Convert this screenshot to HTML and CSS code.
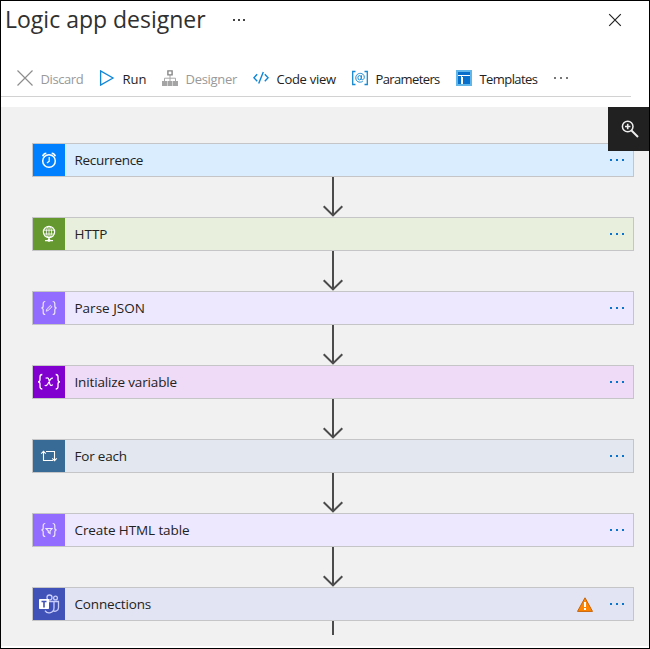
FILE: index.html
```html
<!DOCTYPE html>
<html lang="en">
<head>
<meta charset="utf-8">
<title>Logic app designer</title>
<link rel="stylesheet" href="styles.css">
</head>
<body>
<div class="window">
  <header class="header">
    <h1 class="title">Logic app designer</h1>
    <svg class="title-more" width="12" height="2" viewBox="0 0 12 2" fill="#444"><path d="M0 0h2v2H0zM5 0h2v2H5zM10 0h2v2h-2z"/></svg>
    <svg class="close" width="14" height="14" viewBox="0 0 14 14" fill="none" stroke="#222" stroke-width="1.2"><path d="M1.2 1.2 12.8 12.8M12.8 1.2 1.2 12.8"/></svg>
  </header>

  <nav class="toolbar">
    <div class="tool disabled">
      <svg width="16" height="16" viewBox="0 0 16 16" fill="none" stroke="#8d8d8d" stroke-width="1.2"><path d="M.5.5 15.5 15.5M15.5.5.5 15.5"/></svg>
      <span class="t-discard">Discard</span>
    </div>
    <div class="tool">
      <svg width="16" height="16" viewBox="0 0 16 16" fill="none" stroke="#0f86d8" stroke-width="1.3"><path d="M1.6.9V15.100L14 8Z"/></svg>
      <span class="t-run">Run</span>
    </div>
    <div class="tool disabled">
      <svg width="16" height="16" viewBox="0 0 16 16"><path d="M8 5v3M2.500 11V8.200H13.500V11M8 8v3" fill="none" stroke="#a8a8a8"/><path d="M5.900.9h4.200v4H5.900z" fill="#fff" stroke="#858585" stroke-width="1.400"/><path d="M0 11h5v5H0zM5.500 11h5v5h-5zM11 11h5v5h-5z" fill="#a5a5a5"/></svg>
      <span class="t-designer">Designer</span>
    </div>
    <div class="tool">
      <svg width="16" height="16" viewBox="0 0 16 16" fill="none" stroke="#0f86d8" stroke-width="1.400"><path d="M4.200 4.200.9 7.700 4.200 11.200M11.800 4.200 15.100 7.700 11.800 11.200M10.300 1.900 5.700 13.500"/></svg>
      <span class="t-code">Code view</span>
    </div>
    <div class="tool">
      <svg width="16" height="16" viewBox="0 0 16 16" fill="none" stroke="#1489d2"><path d="M3.500 1.500H.7V14.500H3.500M12.500 1.500H15.300V14.500H12.500" stroke-width="1.300"/><ellipse cx="7.600" cy="7.700" rx="1.700" ry="2.200"/><path d="M9.600 5.300 9.200 8.600C9.200 10.600 12.300 10 12.300 7.200 12.300 1.900 3.800 2.100 3.800 7.800 3.800 11.900 7.500 13 10.700 11.500"/></svg>
      <span class="t-param">Parameters</span>
    </div>
    <div class="tool">
      <svg class="template-icon" width="16" height="16" viewBox="0 0 16 16"><path d="M0 0h16v16H0z" fill="#60b5e9"/><path d="M2 2h12v12H2z" fill="#fff"/><path d="M2 2h12v3H2zM2 6h3v8H2zM6 6h8v1H6zM7 7h7v7H7z" fill="#0870cb"/></svg>
      <span class="t-templates">Templates</span>
    </div>
    <svg class="toolbar-more" width="16" height="2" viewBox="0 0 16 2" fill="#777"><path d="M0 0h2v2H0zM6 0h2v2H6zM12 0h2v2h-2z"/></svg>
  </nav>

  <main class="canvas">
    <div class="zoom-button"><svg width="18" height="18" viewBox="0 0 18 18" fill="none" stroke="#eee"><circle cx="6.700" cy="6.500" r="5.300" stroke-width="1.500"/><path d="M6.700 3.800v5.400M4 6.500h5.400" stroke-width="1.600"/><path d="M10.500 10.500 17 17" stroke-width="1.900"/></svg></div>

    <section class="card recurrence">
      <div class="card-icon"><svg width="32" height="32" viewBox="0 0 32 32" fill="none" stroke="#fff"><circle cx="16" cy="17" r="6.300" stroke-width="1.500"/><path d="M16.200 13v4.200L14 19" stroke-width="1.200"/><path d="M9.700 12.200Q10.500 9.400 13.300 9.200M18.700 9.200Q21.500 9.400 22.300 12.200" stroke-width="1.500"/></svg></div>
      <span class="card-name n-recurrence">Recurrence</span>
      <svg class="card-more" width="14" height="2" viewBox="0 0 14 2"><path d="M0 0h2v2H0zM6 0h2v2H6zM12 0h2v2h-2z"/></svg>
    </section>
    <svg class="arrow" width="22" height="40" viewBox="0 0 22 40"><path d="M11 0v38M1.700 29.200 11 38.400 20.300 29.200"/></svg>

    <section class="card http">
      <div class="card-icon"><svg width="32" height="32" viewBox="0 0 32 32" fill="none" stroke="#fff"><circle cx="16" cy="14" r="5.600" stroke-width="1.200"/><ellipse cx="16" cy="14" rx="2.600" ry="5.600" stroke-width=".8"/><path d="M10.600 12.200h10.800M10.600 16h10.800M16 8.500v11" stroke-width=".8"/><path d="M16 19.500v3M12 22.600h8" stroke-width="1.400"/><circle cx="16" cy="22.300" r="1.500" fill="#fff" stroke="none"/></svg></div>
      <span class="card-name n-http">HTTP</span>
      <svg class="card-more" width="14" height="2" viewBox="0 0 14 2"><path d="M0 0h2v2H0zM6 0h2v2H6zM12 0h2v2h-2z"/></svg>
    </section>
    <svg class="arrow" width="22" height="40" viewBox="0 0 22 40"><path d="M11 0v38M1.700 29.200 11 38.400 20.300 29.200"/></svg>

    <section class="card data">
      <div class="card-icon"><svg width="32" height="32" viewBox="0 0 32 32" fill="none" stroke="#eee7ff" stroke-width="1.200"><path d="M12.300 9.500C10.400 9.500 10.200 10.300 10.200 11.500V14Q10.200 16 8.300 16 10.200 16 10.200 18V20.500C10.200 21.700 10.400 22.500 12.300 22.500M19.700 9.500C21.600 9.500 21.800 10.300 21.800 11.500V14Q21.800 16 23.700 16 21.800 16 21.800 18V20.500C21.800 21.700 21.600 22.500 19.700 22.500"/><path d="M13.200 19.200 13.900 16.900 17.500 13.300 19 14.800 15.400 18.400Z" stroke-width=".9"/><path d="M14.500 18 18.200 14.300" stroke-width=".5"/></svg></div>
      <span class="card-name n-parse">Parse JSON</span>
      <svg class="card-more" width="14" height="2" viewBox="0 0 14 2"><path d="M0 0h2v2H0zM6 0h2v2H6zM12 0h2v2h-2z"/></svg>
    </section>
    <svg class="arrow" width="22" height="40" viewBox="0 0 22 40"><path d="M11 0v38M1.700 29.200 11 38.400 20.300 29.200"/></svg>

    <section class="card variable">
      <div class="card-icon"><svg width="32" height="32" viewBox="0 0 32 32" fill="none" stroke="#fff" stroke-width="1.300"><path d="M9.300 8.500C7.300 8.500 7 9.500 7 11V13.500Q7 15.800 5 15.800 7 15.800 7 18V20.500C7 22.300 7.300 23 9.300 23M22.700 8.500C24.700 8.500 25 9.500 25 11V13.500Q25 15.800 27 15.800 25 15.800 25 18V20.500C25 22.300 24.700 23 22.700 23"/><path d="M12.600 12.300C15.300 10.800 16 13 16.400 16 16.700 18.800 17.500 20.600 20 18.600M20 12.300C17.700 11.200 16.200 15.600 15 17.700 14 19.600 12.900 19.900 11.700 19.200" stroke-width="1.200"/></svg></div>
      <span class="card-name n-variable">Initialize variable</span>
      <svg class="card-more" width="14" height="2" viewBox="0 0 14 2"><path d="M0 0h2v2H0zM6 0h2v2H6zM12 0h2v2h-2z"/></svg>
    </section>
    <svg class="arrow" width="22" height="40" viewBox="0 0 22 40"><path d="M11 0v38M1.700 29.200 11 38.400 20.300 29.200"/></svg>

    <section class="card loop">
      <div class="card-icon"><svg width="32" height="32" viewBox="0 0 32 32" fill="none" stroke="#fff" stroke-width="1.100"><path d="M10.500 11.500v9h9.500M8.200 13.600 10.500 11.300 12.800 13.600M13 11.500h8.500v9M19.200 18.400 21.500 20.700 23.800 18.400"/></svg></div>
      <span class="card-name n-foreach">For each</span>
      <svg class="card-more" width="14" height="2" viewBox="0 0 14 2"><path d="M0 0h2v2H0zM6 0h2v2H6zM12 0h2v2h-2z"/></svg>
    </section>
    <svg class="arrow" width="22" height="40" viewBox="0 0 22 40"><path d="M11 0v38M1.700 29.200 11 38.400 20.300 29.200"/></svg>

    <section class="card data">
      <div class="card-icon"><svg width="32" height="32" viewBox="0 0 32 32" fill="none" stroke="#eee7ff" stroke-width="1.200"><path d="M12.300 9.500C10.400 9.500 10.200 10.300 10.200 11.500V14Q10.200 16 8.300 16 10.200 16 10.200 18V20.500C10.200 21.700 10.400 22.500 12.300 22.500M19.700 9.500C21.600 9.500 21.800 10.300 21.800 11.500V14Q21.800 16 23.700 16 21.800 16 21.800 18V20.500C21.800 21.700 21.600 22.500 19.700 22.500"/><path d="M13 14.500h6L17 17v2.400l-1.700-1V17Z"/></svg></div>
      <span class="card-name n-table">Create HTML table</span>
      <svg class="card-more" width="14" height="2" viewBox="0 0 14 2"><path d="M0 0h2v2H0zM6 0h2v2H6zM12 0h2v2h-2z"/></svg>
    </section>
    <svg class="arrow" width="22" height="40" viewBox="0 0 22 40"><path d="M11 0v38M1.700 29.200 11 38.400 20.300 29.200"/></svg>

    <section class="card teams">
      <div class="card-icon"><svg width="32" height="32" viewBox="0 0 32 32"><g fill="none" stroke="#c9cdfb" stroke-width="1.300"><circle cx="16.500" cy="9.500" r="2.500"/><circle cx="22.500" cy="10" r="1.900"/><path d="M14.500 13.500h6.500V20a4.900 4.900 0 0 1-9 2.600M21 13.500h4.500v6.200a3.600 3.600 0 0 1-5.500 3"/></g><rect x="6" y="11" width="10" height="10" rx=".7" fill="#fff"/><path d="M8.500 13.500h5M11 13.500v6" stroke="#4052b5" stroke-width="1.600"/></svg></div>
      <span class="card-name n-teams">Connections</span>
      <svg class="warning" width="16" height="15" viewBox="0 0 16 15"><path d="M8 .8 15.500 14.400H.5Z" fill="#ff8500" stroke="#c5640b"/><path d="M7 5h2v5H7zM7 11h2v2H7z" fill="#fff"/></svg>
      <svg class="card-more" width="14" height="2" viewBox="0 0 14 2"><path d="M0 0h2v2H0zM6 0h2v2H6zM12 0h2v2h-2z"/></svg>
    </section>
    <div class="tail"></div>
  </main>
</div>
</body>
</html>
```

FILE: styles.css
```css
* { box-sizing: border-box; }
body {
  margin: 0;
  background: #fff;
  font-family: "Open Sans", "Noto Sans", sans-serif;
  color: #222;
}
.window {
  width: 650px;
  height: 649px;
  border: 1px solid #000;
  overflow: hidden;
}
.header {
  display: flex;
  align-items: center;
  height: 38px;
  padding: 0 27px 0 4px;
}
.title {
  width: 228px;
  margin: 0;
  padding-bottom: 2px;
  font-size: 23px;
  font-weight: 400;
  line-height: 36px;
  white-space: nowrap;
  color: #303030;
}
.close { margin-left: auto; }
.toolbar {
  display: grid;
  grid-template-columns: 82px 63px 91px 99px 104px 98px 20px;
  align-items: center;
  width: 630px;
  height: 58px;
  padding: 20px 0 0 16px;
  border-bottom: 1px solid #d2d2d2;
}
.tool {
  display: flex;
  align-items: center;
  gap: 7.5px;
  font-size: 13px;
  line-height: 18px;
  white-space: nowrap;
}
.tool svg { flex: none; }
.tool span { padding-top: 2px; }
.t-discard { letter-spacing: -0.4px; }
.t-designer { letter-spacing: -0.3px; }
.t-code { letter-spacing: -0.28px; }
.t-param { letter-spacing: -0.62px; }
.t-templates { letter-spacing: -0.58px; }
.disabled { color: #999; }
.canvas {
  position: relative;
  display: flex;
  flex-direction: column;
  align-items: center;
  height: 539px;
  margin-top: 10px;
  padding: 36px 15px 0 31px;
  background: #f1f1f1;
}
.zoom-button {
  position: absolute;
  z-index: 1;
  top: 0;
  right: 0;
  display: flex;
  align-items: center;
  justify-content: center;
  width: 41px;
  height: 44px;
  padding-left: 2px;
  background: #212121;
}
.card {
  display: flex;
  align-items: center;
  flex: none;
  width: 602px;
  height: 34px;
  padding-right: 9px;
  border: 1px solid #c5c5c7;
}
.card-icon { width: 32px; height: 32px; }
.card-icon svg { display: block; }
.card-name {
  margin-left: 9.5px;
  font-size: 13.5px;
  line-height: 20px;
  white-space: nowrap;
}
.n-recurrence { letter-spacing: -0.3px; }
.n-variable { letter-spacing: -0.15px; }
.n-foreach { letter-spacing: -0.2px; }
.n-table { letter-spacing: -0.1px; }
.n-teams { letter-spacing: -0.15px; }
.card-more { margin-left: auto; fill: #0873cc; }
.warning { margin-left: auto; }
.warning + .card-more { margin-left: 17px; }
.recurrence { background: #d9edff; }
.recurrence .card-icon { background: #0080ff; }
.http { background: #e8efdd; }
.http .card-icon { background: #65992f; }
.data { background: #eee8ff; }
.data .card-icon { background: #916cff; }
.variable { background: #efdaf7; }
.variable .card-icon { background: #8200cf; }
.loop { background: #e3e8f0; }
.loop .card-icon { background: #386b95; }
.teams { background: #e2e4f3; }
.teams .card-icon { background: #4052b8; }
.arrow { flex: none; fill: none; stroke: #4b4b4b; stroke-width: 2; }
.tail { width: 2px; height: 14px; background: #4b4b4b; }
```
